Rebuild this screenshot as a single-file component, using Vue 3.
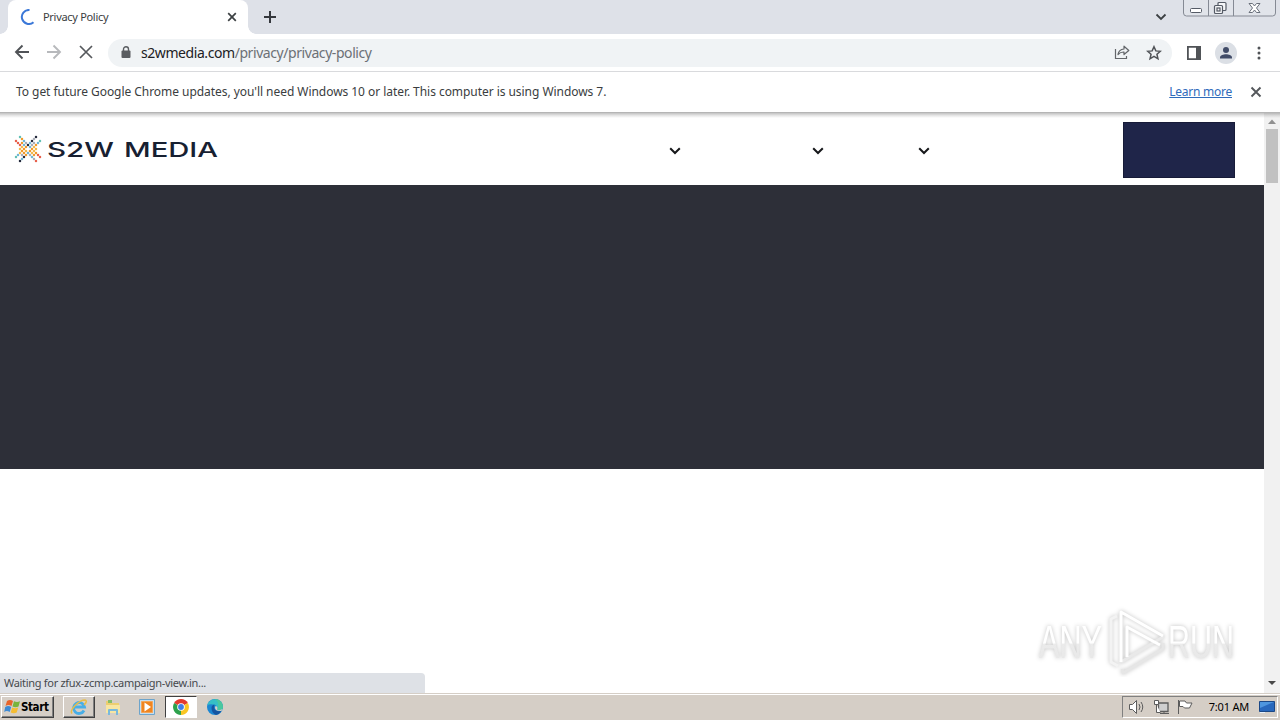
<script setup>
import { ref } from 'vue';

const tabTitle = ref('Privacy Policy');
const host = ref('s2wmedia.com');
const path = ref('/privacy/privacy-policy');
const statusText = ref('Waiting for zfux-zcmp.campaign-view.in...');
const clock = ref('7:01 AM');

// rows of the logo mark, one letter per colour
const palette = {
  r: '#e8604c',
  o: '#f09a2e',
  y: '#f3b94c',
  b: '#6fb7d6',
  g: '#a9adb8',
  n: '#252b3d',
  t: '#63c1b5',
};
const rows = [
  '..t.......n..',
  '...o.....g...',
  'r...b...n...t',
  '.r.o.g.b.g.b.',
  '..r.b.n.g.o..',
  '...y.o.b.y...',
  '..y.o...o.y..',
  '...o.y.o.y...',
  '..y.o.b.y.o..',
  '.b.g.o.g.o.r.',
  't...n...b...r',
  '...b.....g...',
  '..n.......r..',
];
const dots = [];
rows.forEach((row, y) => {
  row.split('').forEach((c, x) => {
    if (c !== '.') {
      dots.push({ x: 2 + x * 2, y: 2 + y * 2, fill: palette[c] });
    }
  });
});
</script>

<template>
  <div class="screen">
    <div class="tab-strip">
      <div class="tab">
        <svg class="spinner" width="16" height="16" viewBox="0 0 16 16">
          <path d="M9.500 1A7 7 0 1 0 13.500 13.200" fill="none" stroke="#3b78d8" stroke-width="2" />
        </svg>
        <span class="tab-title">{{ tabTitle }}</span>
        <svg class="tab-close" width="10" height="10" viewBox="0 0 10 10">
          <path d="M1.200 1.200l7.600 7.600M8.800 1.200L1.200 8.800" stroke="#3c4043" stroke-width="1.700" />
        </svg>
      </div>
      <svg class="new-tab" width="12" height="12" viewBox="0 0 12 12">
        <path d="M6 0v12M0 6h12" stroke="#35383d" stroke-width="2" />
      </svg>
      <svg class="tab-search" width="12" height="8" viewBox="0 0 12 8">
        <path d="M1.500 1.500L6 6l4.500-4.500" fill="none" stroke="#3c4043" stroke-width="1.800" />
      </svg>
      <svg class="window-buttons" width="95" height="18" viewBox="0 0 95 18">
        <path d="M.5 0v13q0 3 3 3h86q3 0 3-3V0M25.500 0v16M50.500 0v16" fill="#e1e4ea" stroke="#858a94" />
        <rect x="7.500" y="8.500" width="11" height="4" rx="1" fill="#fff" stroke="#555b66" />
        <g fill="#f5f6f8" stroke="#555b66" stroke-width="1.200">
          <rect x="35" y="2.500" width="8" height="8" rx="1" />
          <rect x="31.500" y="5.500" width="8" height="8" rx="1" />
          <rect x="34" y="8" width="3" height="3" />
        </g>
        <path d="M66 3.500h3.500l2 2.500 2-2.500H77L73.500 8l3.500 4.500h-3.500l-2-2.500-2 2.500H66L69.500 8z" fill="#fff" stroke="#6a707b" />
      </svg>
    </div>

    <div class="toolbar">
      <svg class="nav-icons" width="100" height="37" viewBox="0 0 100 37">
        <path d="M29 18H16M22.500 11.500L16 18l6.500 6.500" fill="none" stroke="#505357" stroke-width="1.900" />
        <path d="M47 18h13M53.500 11.500L60 18l-6.500 6.500" fill="none" stroke="#b7b9bc" stroke-width="1.900" />
        <path d="M80 12l12 12M92 12L80 24" stroke="#56595d" stroke-width="1.700" />
      </svg>
      <div class="omnibox">
        <svg class="lock" width="10" height="13" viewBox="0 0 10 13">
          <rect x="0.500" y="4.500" width="9" height="7.500" rx="1" fill="#5a5d61" />
          <path d="M2.500 5V3.200a2.500 2.500 0 0 1 5 0V5" fill="none" stroke="#5a5d61" stroke-width="1.400" />
        </svg>
        <span class="url"><span class="host">{{ host }}</span><span class="path">{{ path }}</span></span>
        <svg class="share" width="16" height="15" viewBox="0 0 16 15">
          <path d="M1.500 4v9.500h11V11" fill="none" stroke="#63666a" stroke-width="1.200" />
          <path d="M4 9.500q.8-5 6-5.500V1.200L14.800 5.500 10 9.500V7Q6.500 6.800 4 9.500z" fill="none" stroke="#63666a" stroke-width="1.200" stroke-linejoin="round" />
        </svg>
        <svg class="star" width="16" height="16" viewBox="0 0 16 16">
          <path d="M8 1.700l1.850 4.200 4.500.4-3.400 3 1 4.500L8 11.450 4.050 13.800l1-4.500-3.400-3 4.500-.4z" fill="none" stroke="#505357" stroke-width="1.500" />
        </svg>
      </div>
      <svg class="panel" width="14" height="14" viewBox="0 0 14 14">
        <path d="M.9.900h12.200v12.200H.9z" fill="none" stroke="#505357" stroke-width="1.800" />
        <path d="M9 1h4v12H9z" fill="#505357" />
      </svg>
      <svg class="avatar" width="22" height="22" viewBox="0 0 22 22">
        <circle cx="11" cy="11" r="11" fill="#dbdfe5" />
        <circle cx="11" cy="8" r="3" fill="#414c68" />
        <path d="M5 16.500v-1.200c0-2 3.500-3.100 6-3.100s6 1.100 6 3.100v1.200z" fill="#414c68" />
      </svg>
      <svg class="menu-dots" width="4" height="14" viewBox="0 0 4 14">
        <circle cx="2" cy="2" r="1.500" />
        <circle cx="2" cy="7" r="1.500" />
        <circle cx="2" cy="12" r="1.500" />
      </svg>
    </div>

    <div class="infobar">
      <span class="info-text">To get future Google Chrome updates, you'll need Windows 10 or later. This computer is using Windows 7.</span>
      <a class="learn-more">Learn more</a>
      <svg class="info-close" width="12" height="12" viewBox="0 0 12 12">
        <path d="M1.500 1.500l9 9M10.500 1.500l-9 9" stroke="#54575b" stroke-width="1.900" />
      </svg>
    </div>

    <div class="viewport">
      <div class="page">
        <header class="site-header">
          <svg class="logo" width="206" height="28" viewBox="0 0 206 28">
            <circle v-for="(dot, i) in dots" :key="i" :cx="dot.x" :cy="dot.y" r="1.250" :fill="dot.fill" />
            <text x="33" y="21.500" textLength="67" lengthAdjust="spacingAndGlyphs">S2W</text>
            <text x="110" y="21.500" textLength="94" lengthAdjust="spacingAndGlyphs">MEDIA</text>
          </svg>
          <nav class="site-nav">
            <svg v-for="n in 3" :key="n" class="caret" width="12" height="8" viewBox="0 0 12 8">
              <path d="M1.200 1.200L6 6l4.800-4.800" fill="none" stroke="#17181b" stroke-width="2" />
            </svg>
          </nav>
          <div class="cta"></div>
        </header>
        <section class="hero"></section>
      </div>
      <div class="scrollbar">
        <svg width="16" height="15" viewBox="0 0 16 15"><path d="M4 11l4-4.500 4 4.500z" fill="#909090" /></svg>
        <div class="thumb"></div>
        <svg class="arrow-down" width="16" height="17" viewBox="0 0 16 17"><path d="M4 5h8l-4 4z" fill="#484848" /></svg>
      </div>
      <div class="status-bubble">{{ statusText }}</div>
      <svg class="watermark" width="250" height="72" viewBox="0 0 250 72">
        <defs>
          <linearGradient id="fade" x1="0" y1="0" x2="0" y2="1">
            <stop offset="0.520" stop-color="#fff" />
            <stop offset="0.540" stop-color="#ebebeb" />
            <stop offset="1" stop-color="#e6e6e6" />
          </linearGradient>
        </defs>
        <g class="mark">
          <text x="9" y="53" textLength="63" lengthAdjust="spacingAndGlyphs">ANY</text>
          <text x="138" y="53" textLength="66" lengthAdjust="spacingAndGlyphs">RUN</text>
          <g fill="none" stroke-width="3" stroke-linejoin="round">
            <path d="M92 64l1 4 40-24v-6" stroke="#e6e6e6" />
            <path d="M91 57l42-25-40 24z" stroke="#e9e9e9" />
            <path d="M87 11l-6 3v43l7 4" stroke="#f3f3f3" />
            <path d="M91 57V7l42 24M97 52V22l33 18" stroke="#fff" />
          </g>
        </g>
      </svg>
    </div>

    <footer class="taskbar">
      <button class="start">
        <svg width="17" height="16" viewBox="0 0 17 16">
          <path d="M3 2q3-2 6 0L7.500 7q-3-2-6 0z" fill="#e8642a" />
          <path d="M10 2.300q3 1.500 6 0L14.500 7.500q-3 1.500-6 0z" fill="#78b43c" />
          <path d="M1.200 8q3-2 6 0l-1.500 5q-3-2-5.500 0z" fill="#3d8ad4" />
          <path d="M8.200 8.500q3 1.500 6 0l-1.500 5q-3 1.500-6 0z" fill="#f5bd33" />
        </svg>
        <span>Start</span>
      </button>
      <div class="task raised">
        <svg width="18" height="18" viewBox="0 0 18 18">
          <path d="M14 12.500A5.500 5.500 0 1 1 14.500 9H4.500" fill="none" stroke="#48aee6" stroke-width="2.800" />
          <path d="M2 15.500C-1 12 9 2 15 2q3 1-1 5" fill="none" stroke="#e8bd47" stroke-width="1.500" />
        </svg>
      </div>
      <div class="task">
        <svg width="18" height="18" viewBox="0 0 18 18">
          <path d="M2 3h5l1 2h7v10H2z" fill="#ecce70" />
          <path d="M4 2h4v3H4z" fill="#85bd66" />
          <path d="M2 7h14v8H2z" fill="#f7e6a2" />
          <path d="M4 17v-5q0-1 1-1h8q1 0 1 1v5h-2v-4H6v4z" fill="#79b9dc" />
        </svg>
      </div>
      <div class="task">
        <svg width="18" height="18" viewBox="0 0 18 18">
          <path d="M1.500 1.500h15v15h-15z" fill="#c5def0" stroke="#6da4cb" />
          <path d="M3.500 3.500h11v11h-11z" fill="#ef8521" stroke="#f3a558" />
          <path d="M6.500 4.500L13 9l-6.500 4.500z" fill="#fff" />
        </svg>
      </div>
      <div class="task active">
        <svg width="16" height="16" viewBox="0 0 16 16">
          <path d="M8 8L1.100 4A8 8 0 0 1 14.900 4z" fill="#e33b2e" />
          <path d="M8 8l6.900-4A8 8 0 0 1 8 16z" fill="#f9c623" />
          <path d="M8 8v8A8 8 0 0 1 1.100 4z" fill="#2da14c" />
          <circle cx="8" cy="8" r="3.800" fill="#fff" />
          <circle cx="8" cy="8" r="2.900" fill="#3f7fe6" />
        </svg>
      </div>
      <div class="task">
        <svg width="16" height="16" viewBox="0 0 16 16">
          <circle cx="8" cy="8" r="8" fill="#1b86d2" />
          <path d="M.3 6a8 8 0 0 1 15.700 2c0 3.500-4 4-6 2.500 1-1 .5-4.500-3.500-5Q3 4.800.3 6z" fill="#36bfc6" />
          <path d="M8 0a8 8 0 0 1 8 8c0 3.500-4 4-6 2.500 2-4 2-7-2-10.500z" fill="#58cf84" opacity="0.600" />
          <path d="M4.500 9q0-3 3-3.500-1.500 4 1.500 6 2.500 1.300 5.500.3A8 8 0 0 1 9 16Q4.500 14 4.500 9z" fill="#1554a0" />
          <path d="M8.500 7q-1.500 2 .5 4 3 1.800 6 .5.500-.5.500-1.500-3 2-5.500.5 1-1.500 0-3z" fill="#d4d0c8" />
        </svg>
      </div>
      <div class="tray">
        <svg class="tray-icons" width="70" height="18" viewBox="0 0 70 18">
          <g fill="#fff" stroke="#5c5c5c">
            <path d="M1.500 6.500h3l4-4v13l-4-4h-3z" />
            <path d="M11 6q2 3 0 6M13 4q3.500 5 0 10" fill="none" />
            <path d="M30.500 5h9.500v8.500h-9.500z" fill="#cfcfcf" stroke-width="1.300" />
            <path d="M32 15.500h9M36 13v2.500" />
            <path d="M26.500 2.500h4v4h-4zM28.500 6.500v8h4" />
            <path d="M50.500 2v14" />
            <path d="M51.500 3h5.500l1.500 2h5.500l-2.500 5h-5l-1.500-1.500h-3.500z" />
          </g>
        </svg>
        <span class="clock">{{ clock }}</span>
        <svg class="desktop" width="16" height="14" viewBox="0 0 16 14">
          <path d="M.5 1.500h15v10H.5z" fill="#2868bd" stroke="#1b4887" />
          <path d="M1 2h14L1 8z" fill="#4e96df" />
          <path d="M1 12.500h5" stroke="#e8f1fa" />
        </svg>
      </div>
    </footer>
  </div>
</template>

<style>
body {
  margin: 0;
  overflow: hidden;
}
</style>

<style scoped>
.screen {
  width: 1280px;
  height: 720px;
  display: flex;
  flex-direction: column;
  background: #fff;
  color: #3a3d40;
  font-family: "Noto Sans", sans-serif;
  overflow: hidden;
}

svg {
  display: block;
  flex-shrink: 0;
}

.tab-strip {
  height: 34px;
  display: flex;
  align-items: center;
  background: #dee1e8;
  flex-shrink: 0;
}

.tab {
  position: relative;
  box-sizing: border-box;
  width: 240px;
  height: 34px;
  margin-left: 8px;
  padding: 0 11px 0 12px;
  display: flex;
  align-items: center;
  background: #fff;
  border-radius: 8px 8px 0 0;
}

.tab::before,
.tab::after {
  content: '';
  position: absolute;
  bottom: 0;
  width: 8px;
  height: 8px;
}

.tab::before {
  left: -8px;
  background: radial-gradient(circle at 0 0, transparent 7.5px, #fff 8px);
}

.tab::after {
  right: -8px;
  background: radial-gradient(circle at 100% 0, transparent 7.5px, #fff 8px);
}

.tab-title {
  margin-left: 7px;
  padding-bottom: 2px;
  flex: 1;
  font-size: 11px;
  letter-spacing: -0.3px;
}

.new-tab {
  margin-left: 16px;
}

.tab-search {
  margin-left: auto;
}

.window-buttons {
  align-self: flex-start;
  margin-left: 16px;
  margin-right: 2px;
}

.toolbar {
  height: 37px;
  display: flex;
  align-items: center;
  border-bottom: 1px solid #d9dadd;
  flex-shrink: 0;
}

.nav-icons {
  margin-right: 8px;
}

.omnibox {
  box-sizing: border-box;
  width: 1064px;
  height: 28px;
  padding: 0 10px 0 13px;
  display: flex;
  align-items: center;
  background: #f0f3f5;
  border-radius: 14px;
}

.url {
  margin-left: 10px;
  flex: 1;
  font-size: 14px;
  line-height: 20px;
  letter-spacing: -0.43px;
}

.host {
  color: #202124;
}

.path {
  color: #6c7075;
}

.share {
  margin-right: 16px;
}

.panel {
  margin-left: 15px;
}

.avatar {
  margin-left: 14px;
}

.menu-dots {
  margin-left: 20px;
  fill: #505357;
}

.infobar {
  height: 40px;
  padding: 0 18px 0 16px;
  display: flex;
  align-items: center;
  border-bottom: 1px solid #b5b5b5;
  font-size: 12px;
  flex-shrink: 0;
}

.info-text {
  flex: 1;
  padding-bottom: 2px;
  letter-spacing: -0.05px;
  white-space: nowrap;
}

.learn-more {
  margin-right: 18px;
  padding-bottom: 2px;
  letter-spacing: -0.25px;
  color: #2f6bbb;
  text-decoration: underline;
}

.viewport {
  position: relative;
  flex: 1;
  display: flex;
  min-height: 0;
}

.viewport::before {
  content: '';
  position: absolute;
  top: 0;
  left: 0;
  right: 0;
  height: 5px;
  background: linear-gradient(rgba(0, 0, 0, 0.24), rgba(0, 0, 0, 0.1) 50%, rgba(0, 0, 0, 0));
  z-index: 1;
}

.page {
  flex: 1;
}

.site-header {
  height: 72px;
  display: flex;
  align-items: center;
}

.logo {
  margin-left: 14px;
  fill: #172031;
}

.logo text {
  font-family: Inter, "Liberation Sans", sans-serif;
  font-size: 20px;
  font-weight: 500;
}

.site-nav {
  margin-left: 449px;
  margin-top: 3px;
  width: 261px;
  display: grid;
  grid-template-columns: 143px 106px 12px;
}

.cta {
  box-sizing: border-box;
  width: 112px;
  height: 56px;
  margin-left: auto;
  margin-right: 29px;
  margin-top: 2px;
  background: #1f2549;
  border: 1px solid #171b38;
}

.hero {
  height: 284px;
  background: #2d2f38;
}

.scrollbar {
  width: 16px;
  display: flex;
  flex-direction: column;
  align-items: center;
  background: #f1f1f1;
}

.thumb {
  width: 12px;
  height: 54px;
  margin-top: 1px;
  background: #c1c1c1;
}

.arrow-down {
  margin-top: auto;
}

.status-bubble {
  position: absolute;
  left: 0;
  bottom: 0;
  box-sizing: border-box;
  width: 425px;
  height: 20px;
  padding-left: 4px;
  background: #dee1e6;
  border-radius: 0 4px 0 0;
  font-size: 11px;
  line-height: 20px;
  letter-spacing: -0.3px;
  color: #46494d;
}

.watermark {
  position: absolute;
  left: 1030px;
  bottom: 16px;
}

.mark {
  filter: drop-shadow(0 0 2px rgba(0, 0, 0, 0.25));
}

.mark text {
  font-family: "Liberation Sans", sans-serif;
  font-size: 46px;
  fill: url(#fade);
}

.taskbar {
  box-sizing: border-box;
  height: 27px;
  padding: 2px 2px 0 1px;
  display: flex;
  align-items: flex-start;
  background: #d5cec6;
  border-top: 1px solid #d5cec6;
  box-shadow: inset 0 1px #fff;
  flex-shrink: 0;
}

.start {
  box-sizing: border-box;
  width: 53px;
  height: 22px;
  margin-right: 9px;
  padding: 0 2px;
  display: flex;
  align-items: center;
  background: #d5cec6;
  border: 1px solid;
  border-color: #fff #404040 #404040 #fff;
  box-shadow: inset -1px -1px #808080;
  font-family: "DejaVu Sans Condensed", sans-serif;
  font-size: 11.5px;
  font-weight: bold;
  letter-spacing: -0.4px;
  color: #000;
}

.task {
  box-sizing: border-box;
  width: 32px;
  height: 22px;
  margin-right: 2px;
  display: flex;
  align-items: center;
  justify-content: center;
}

.raised {
  border: 1px solid;
  border-color: #fff #404040 #404040 #fff;
  box-shadow: inset -1px -1px #808080;
}

.active {
  background: #fff;
  border: 1px solid;
  border-color: #404040 #fff #fff #404040;
}

.tray {
  box-sizing: border-box;
  width: 156px;
  height: 22px;
  margin-left: auto;
  padding: 0 2px 0 5px;
  display: flex;
  align-items: center;
  border: 1px solid;
  border-color: #808080 #fff #fff #808080;
}

.clock {
  margin-left: auto;
  margin-right: 10px;
  padding-bottom: 2px;
  font-size: 11px;
  letter-spacing: -0.2px;
  color: #000;
  white-space: nowrap;
}
</style>
